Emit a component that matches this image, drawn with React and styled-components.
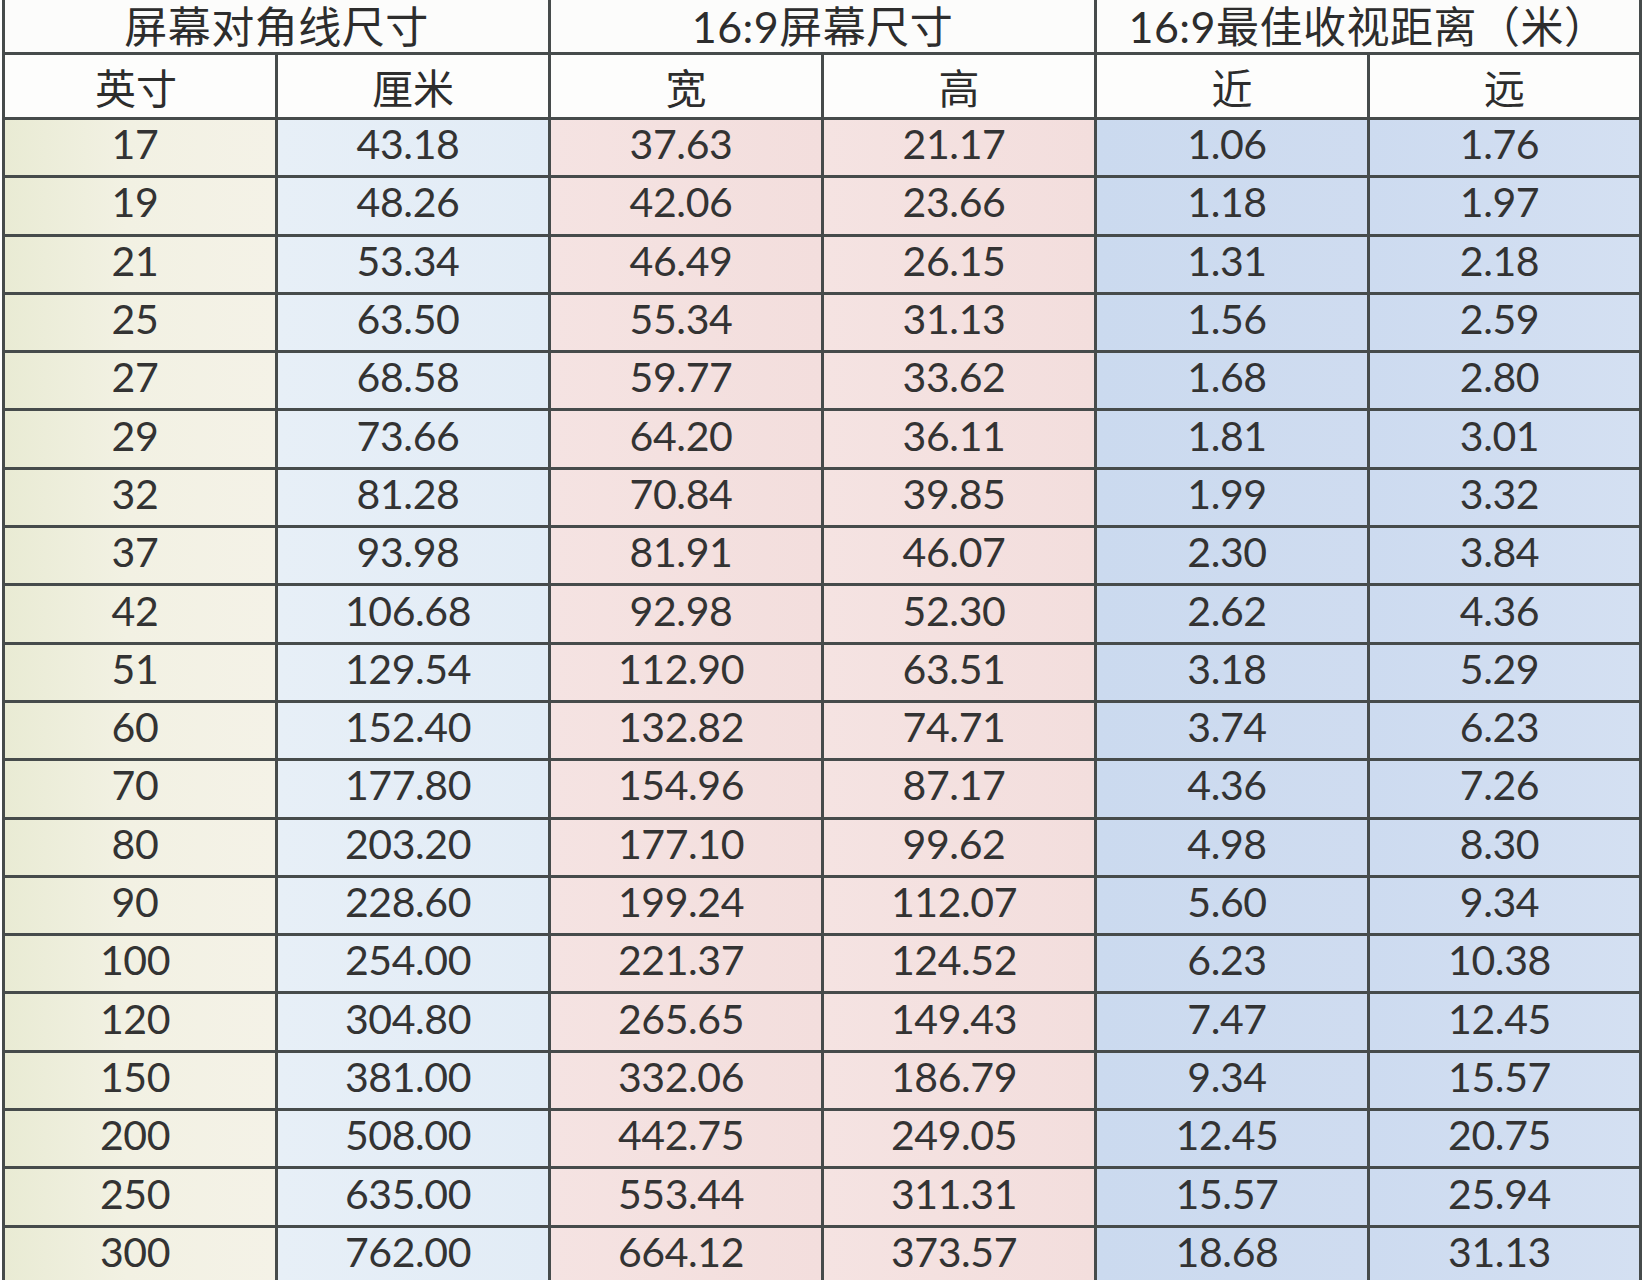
import styled, { createGlobalStyle } from "styled-components";

const GlobalStyle = createGlobalStyle`
  body {
    margin: 0;
    background: #fff;
  }
`;

const Page = styled.div`
  padding-left: 2px;
  font-family: Lato, "Noto Sans CJK SC", sans-serif;
  color: #2d2d2d;
`;

const Sheet = styled.div`
  display: grid;
  width: 1640px;
  grid-template-columns: 276px repeat(4, 273px) 272px;
  grid-template-rows: 55px 65px;
  grid-auto-rows: 58.3px;
`;

const tones = {
  inch: "linear-gradient(90deg, #e9ebd4 0%, #f2f1e3 45%, #f4f2e7 100%)",
  cm: "linear-gradient(90deg, #e7eff7 0%, #e2ecf6 100%)",
  size: "linear-gradient(90deg, #f5e3e2 0%, #f3dedd 100%)",
  near: "linear-gradient(90deg, #cbdaef 0%, #cfdcf0 100%)",
  far: "linear-gradient(90deg, #cddbf0 0%, #d4e0f2 100%)",
};

const Cell = styled.div`
  box-sizing: border-box;
  display: flex;
  align-items: center;
  justify-content: center;
  border-right: 3px solid #464b4b;
  border-bottom: 3px solid #464b4b;
  border-left: ${(p) => (p.$edge ? "3px solid #464b4b" : "none")};
  white-space: nowrap;
`;

const GroupHead = styled(Cell)`
  grid-column: span 2;
  background: #fcfcfb;
  font-size: 43px;
  padding-bottom: 4px;
  letter-spacing: 0.5px;
`;

const SubHead = styled(Cell)`
  background: #fdfdfc;
  font-size: 41px;
  padding-right: ${(p) => (p.$edge ? "8px" : "0")};
`;

const Value = styled(Cell)`
  background: ${(p) => tones[p.$tone]};
  font-size: 41px;
  color: #333;
  padding: 0 10px 8px 0;
  letter-spacing: -0.4px;
`;

const rows = [
  ["17", "43.18", "37.63", "21.17", "1.06", "1.76"],
  ["19", "48.26", "42.06", "23.66", "1.18", "1.97"],
  ["21", "53.34", "46.49", "26.15", "1.31", "2.18"],
  ["25", "63.50", "55.34", "31.13", "1.56", "2.59"],
  ["27", "68.58", "59.77", "33.62", "1.68", "2.80"],
  ["29", "73.66", "64.20", "36.11", "1.81", "3.01"],
  ["32", "81.28", "70.84", "39.85", "1.99", "3.32"],
  ["37", "93.98", "81.91", "46.07", "2.30", "3.84"],
  ["42", "106.68", "92.98", "52.30", "2.62", "4.36"],
  ["51", "129.54", "112.90", "63.51", "3.18", "5.29"],
  ["60", "152.40", "132.82", "74.71", "3.74", "6.23"],
  ["70", "177.80", "154.96", "87.17", "4.36", "7.26"],
  ["80", "203.20", "177.10", "99.62", "4.98", "8.30"],
  ["90", "228.60", "199.24", "112.07", "5.60", "9.34"],
  ["100", "254.00", "221.37", "124.52", "6.23", "10.38"],
  ["120", "304.80", "265.65", "149.43", "7.47", "12.45"],
  ["150", "381.00", "332.06", "186.79", "9.34", "15.57"],
  ["200", "508.00", "442.75", "249.05", "12.45", "20.75"],
  ["250", "635.00", "553.44", "311.31", "15.57", "25.94"],
  ["300", "762.00", "664.12", "373.57", "18.68", "31.13"],
];

const columnTones = ["inch", "cm", "size", "size", "near", "far"];
const subHeads = ["英寸", "厘米", "宽", "高", "近", "远"];

const App = () => {
  return (
    <Page>
      <GlobalStyle />
      <Sheet>
        <GroupHead $edge>屏幕对角线尺寸</GroupHead>
        <GroupHead>16:9屏幕尺寸</GroupHead>
        <GroupHead>16:9最佳收视距离（米）</GroupHead>

        {subHeads.map((label, i) => (
          <SubHead key={label} $edge={i === 0}>{label}</SubHead>
        ))}

        {rows.map((row) =>
          row.map((value, i) => (
            <Value key={row[0] + "-" + i} $edge={i === 0} $tone={columnTones[i]}>
              {value}
            </Value>
          ))
        )}
      </Sheet>
    </Page>
  );
};

export default App;
